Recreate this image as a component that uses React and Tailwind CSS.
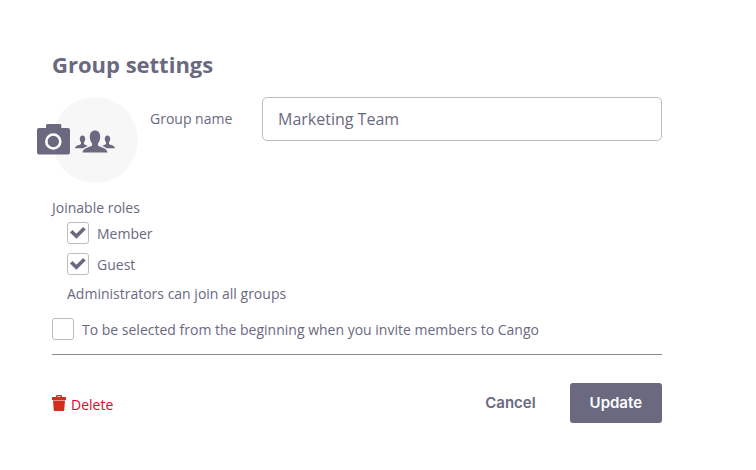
import { useState } from "react";

function CameraIcon({ className }) {
  return (
    <svg viewBox="0 0 33 31" className={className} aria-hidden="true">
      <path
        fill="#6a6980"
        d="M10.500 0h12.500q1.300 0 1.300 1.300V4H31q2 0 2 2v22.500q0 2-2 2H2q-2 0-2-2V6q0-2 2-2h7V1.500Q9 0 10.500 0z"
      />
      <circle cx="16.300" cy="17.500" r="7" fill="#6a6980" stroke="#fff" strokeWidth="2.600" />
    </svg>
  );
}

function PeopleIcon({ className }) {
  return (
    <svg viewBox="0 0 40 24" className={className} aria-hidden="true" fill="#6a6980">
      <path d="M20 .4c3.200 0 5.200 2.400 5.200 6.400 0 2.900-.9 5.200-2.300 6.600v2c.9 1.600 9.300 2 9.600 7.200H7.500c.3-5.200 8.700-5.600 9.600-7.200v-2c-1.400-1.400-2.300-3.700-2.300-6.600 0-4 2-6.400 5.200-6.400z" />
      <path d="M7.500 5.600c1.800 0 2.700 1.400 2.700 3.200 0 1.500-.5 2.700-1.200 3.500v1.600c.5.800 2.800 1 3.800 2-1.900.6-3.200 1.200-4.200 2.300H0c.2-3 5.400-3.400 6-4.300v-1.600c-.7-.8-1.200-2-1.200-3.500 0-1.800.9-3.200 2.700-3.200z" />
      <path d="M32.500 5.600c-1.800 0-2.700 1.400-2.700 3.200 0 1.500.5 2.700 1.200 3.500v1.600c-.5.800-2.800 1-3.800 2 1.900.6 3.200 1.200 4.200 2.300H40c-.2-3-5.400-3.400-6-4.300v-1.600c.7-.8 1.200-2 1.200-3.500 0-1.800-.9-3.200-2.700-3.200z" />
    </svg>
  );
}

function TrashIcon({ className }) {
  return (
    <svg viewBox="0 0 14 16" className={className} aria-hidden="true" fill="#d52b1e">
      <path
        fillRule="evenodd"
        d="M5 0h4q1 0 1 1v1h3.500q.5 0 .5.500V5H0V2.500Q0 2 .5 2H4V1q0-1 1-1zm.3 1.200V2h3.400v-.8z"
      />
      <path d="M1 5.500h12l-.8 9.700q-.1.800-.9.800H2.700q-.8 0-.9-.8z" />
    </svg>
  );
}

function Checkbox({ label, defaultChecked = false }) {
  const [checked, setChecked] = useState(defaultChecked);
  return (
    <label className="flex w-fit items-center gap-2">
      <span className="grid shrink-0">
        <input
          type="checkbox"
          checked={checked}
          onChange={(e) => setChecked(e.target.checked)}
          className="col-start-1 row-start-1 size-[22px] appearance-none rounded-[3px] border border-[#bdbdbd] bg-white"
        />
        {checked && (
          <svg
            viewBox="0 0 22 22"
            className="pointer-events-none col-start-1 row-start-1 size-[22px]"
            aria-hidden="true"
          >
            <path d="M4.200 9.300l5.200 4.900 8-8" fill="none" stroke="#6a6980" strokeWidth="3.600" />
          </svg>
        )}
      </span>
      <span className="pt-px">{label}</span>
    </label>
  );
}

export default function App() {
  return (
    <main className="bg-white pt-[49px] pr-[94px] pb-12 pl-[52px] font-['Open_Sans',sans-serif] text-sm leading-5 text-[#6a6980]">
      <form onSubmit={(e) => e.preventDefault()}>
        <h1 className="text-[22px] leading-[30px] font-bold">Group settings</h1>

        <div className="mt-[18px] flex items-start">
          <button
            type="button"
            aria-label="Change group picture"
            className="relative flex size-[86px] shrink-0 items-center justify-center rounded-full bg-[#f7f7f7]"
          >
            <PeopleIcon className="mt-1 h-6 w-10" />
            <CameraIcon className="absolute top-[27px] -left-[15px] h-[31px] w-[33px]" />
          </button>
          <div className="flex flex-1 items-center pl-3">
            <label htmlFor="group-name" className="w-28 shrink-0">
              Group name
            </label>
            <input
              id="group-name"
              type="text"
              defaultValue="Marketing Team"
              className="h-11 w-full min-w-0 flex-1 rounded-[5px] border border-[#bdbdbd] bg-white px-[15px] text-base"
            />
          </div>
        </div>

        <fieldset className="mt-[15px]">
          <legend>Joinable roles</legend>
          <div className="flex flex-col gap-[9px] pt-1 pl-[15px]">
            <Checkbox label="Member" defaultChecked />
            <Checkbox label="Guest" defaultChecked />
            <p>Administrators can join all groups</p>
          </div>
        </fieldset>

        <div className="mt-[14px] border-b border-[#8c8c8c] pb-[14px]">
          <Checkbox label="To be selected from the beginning when you invite members to Cango" />
        </div>

        <div className="mt-7 flex items-center justify-between">
          <button type="button" className="flex items-center gap-[5px] text-[#e6002d]">
            <TrashIcon className="h-4 w-[14px]" />
            <span className="pt-1">Delete</span>
          </button>
          <div className="flex items-center gap-[34px] font-[Inter,sans-serif] text-[15px] font-semibold">
            <button type="button">Cancel</button>
            <button type="submit" className="h-10 rounded-[3px] bg-[#6a6980] px-5 text-white">
              Update
            </button>
          </div>
        </div>
      </form>
    </main>
  );
}
